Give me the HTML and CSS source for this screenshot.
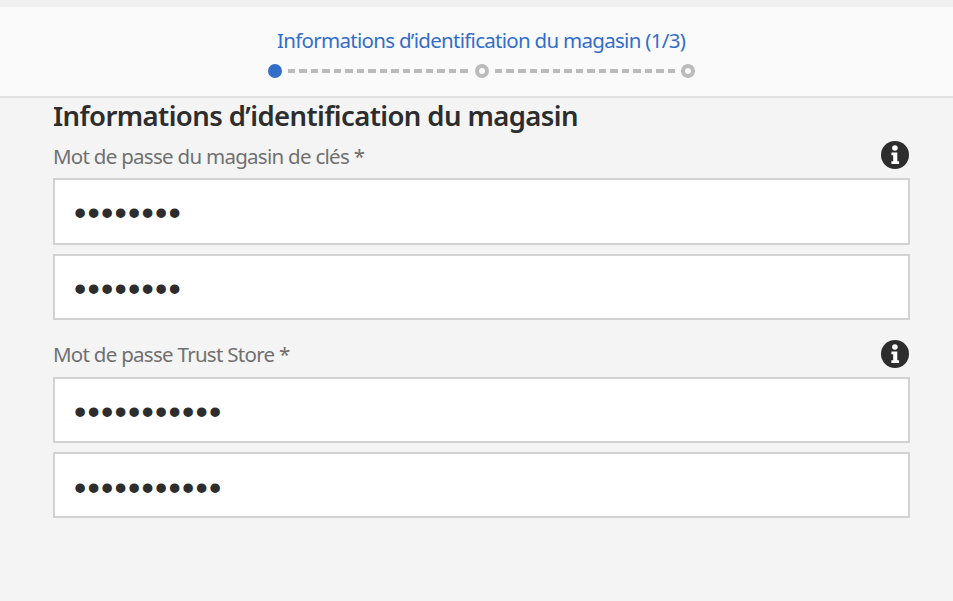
FILE: index.html
```html
<!DOCTYPE html>
<html lang="fr">
<head>
<meta charset="utf-8">
<title>Informations d’identification du magasin</title>
<link rel="stylesheet" href="styles.css">
</head>
<body>
<header class="wizard">
  <div class="wizard-title"><span>Informations d’identification du magasin (1/3)</span></div>
  <div class="steps">
    <i class="dot active"></i><i class="dashes"></i><i class="dot"></i><i class="dashes"></i><i class="dot"></i>
  </div>
</header>
<main class="form">
  <h1><span>Informations d’identification du magasin</span></h1>
  <section class="group">
    <div class="row">
      <label>Mot de passe du magasin de clés *</label>
      <svg class="info" viewBox="0 0 28 28"><circle cx="14" cy="14" r="14"/><circle class="mark" cx="13.9" cy="7" r="2.8"/><path class="mark" d="M10.4 11.6h5.9v8.6h1.8v2.7h-7.7v-2.7h1.8v-5.9h-1.8z"/></svg>
    </div>
    <div class="field tall"><span>••••••••</span></div>
    <div class="field"><span>••••••••</span></div>
  </section>
  <section class="group trust">
    <div class="row">
      <label>Mot de passe Trust Store *</label>
      <svg class="info" viewBox="0 0 28 28"><circle cx="14" cy="14" r="14"/><circle class="mark" cx="13.9" cy="7" r="2.8"/><path class="mark" d="M10.4 11.6h5.9v8.6h1.8v2.7h-7.7v-2.7h1.8v-5.9h-1.8z"/></svg>
    </div>
    <div class="field"><span>•••••••••••</span></div>
    <div class="field last"><span>•••••••••••</span></div>
  </section>
</main>
</body>
</html>
```
FILE: styles.css
```css
* { box-sizing: border-box; }
body {
  margin: 0;
  height: 601px;
  overflow: hidden;
  background: #f4f4f4;
  font-family: "Noto Sans", sans-serif;
  color: #2d2d2d;
}
.wizard {
  height: 98px;
  padding-top: 18px;
  background: #fafafa;
  border-top: 7px solid #f0f0f0;
  border-bottom: 2px solid #e1e1e1;
}
.wizard-title {
  height: 30px;
  padding-left: 277px;
  font-size: 20.5px;
  line-height: 30px;
  letter-spacing: -0.71px;
  white-space: nowrap;
  color: #326ec8;
}
.steps {
  display: flex;
  align-items: center;
  width: 427px;
  height: 14px;
  margin: 9px 0 0 268px;
}
.dot {
  flex: none;
  width: 14px;
  height: 14px;
  border: 4px solid #bbb;
  border-radius: 50%;
}
.dot.active { background: #326ec8; border-color: #326ec8; }
.dashes {
  flex: 1;
  height: 4px;
  margin: 0 6px;
  background: repeating-linear-gradient(90deg, #bbb 0 7.5px, transparent 7.5px 11.5px);
}
.form { width: 857px; margin-left: 53px; }
h1 {
  margin: 0;
  height: 38px;
  font-size: 27.5px;
  font-weight: 600;
  line-height: 36px;
  letter-spacing: -0.6px;
  white-space: nowrap;
}
.row {
  display: flex;
  justify-content: space-between;
  height: 42px;
  padding: 5px 1px 0 0;
}
.row label {
  font-size: 20.5px;
  line-height: 30px;
  letter-spacing: -0.72px;
  color: #707070;
  white-space: nowrap;
}
.info { width: 28px; height: 28px; fill: #2d2d2d; }
.info .mark { fill: #fff; }
.group.trust { margin-top: 15px; }
.trust label { line-height: 28px; }
.field {
  display: flex;
  align-items: center;
  height: 66px;
  margin-bottom: 10px;
  padding: 3px 0 0 19px;
  background: #fff;
  border: 2px solid #d2d2d2;
}
.field.tall { height: 67px; margin-bottom: 9px; }
.trust .field { margin-bottom: 9px; }
.trust .last { padding-top: 6px; }
.field span {
  font-family: "Liberation Sans", sans-serif;
  font-size: 35px;
  line-height: 40px;
  letter-spacing: 1.25px;
}
```
